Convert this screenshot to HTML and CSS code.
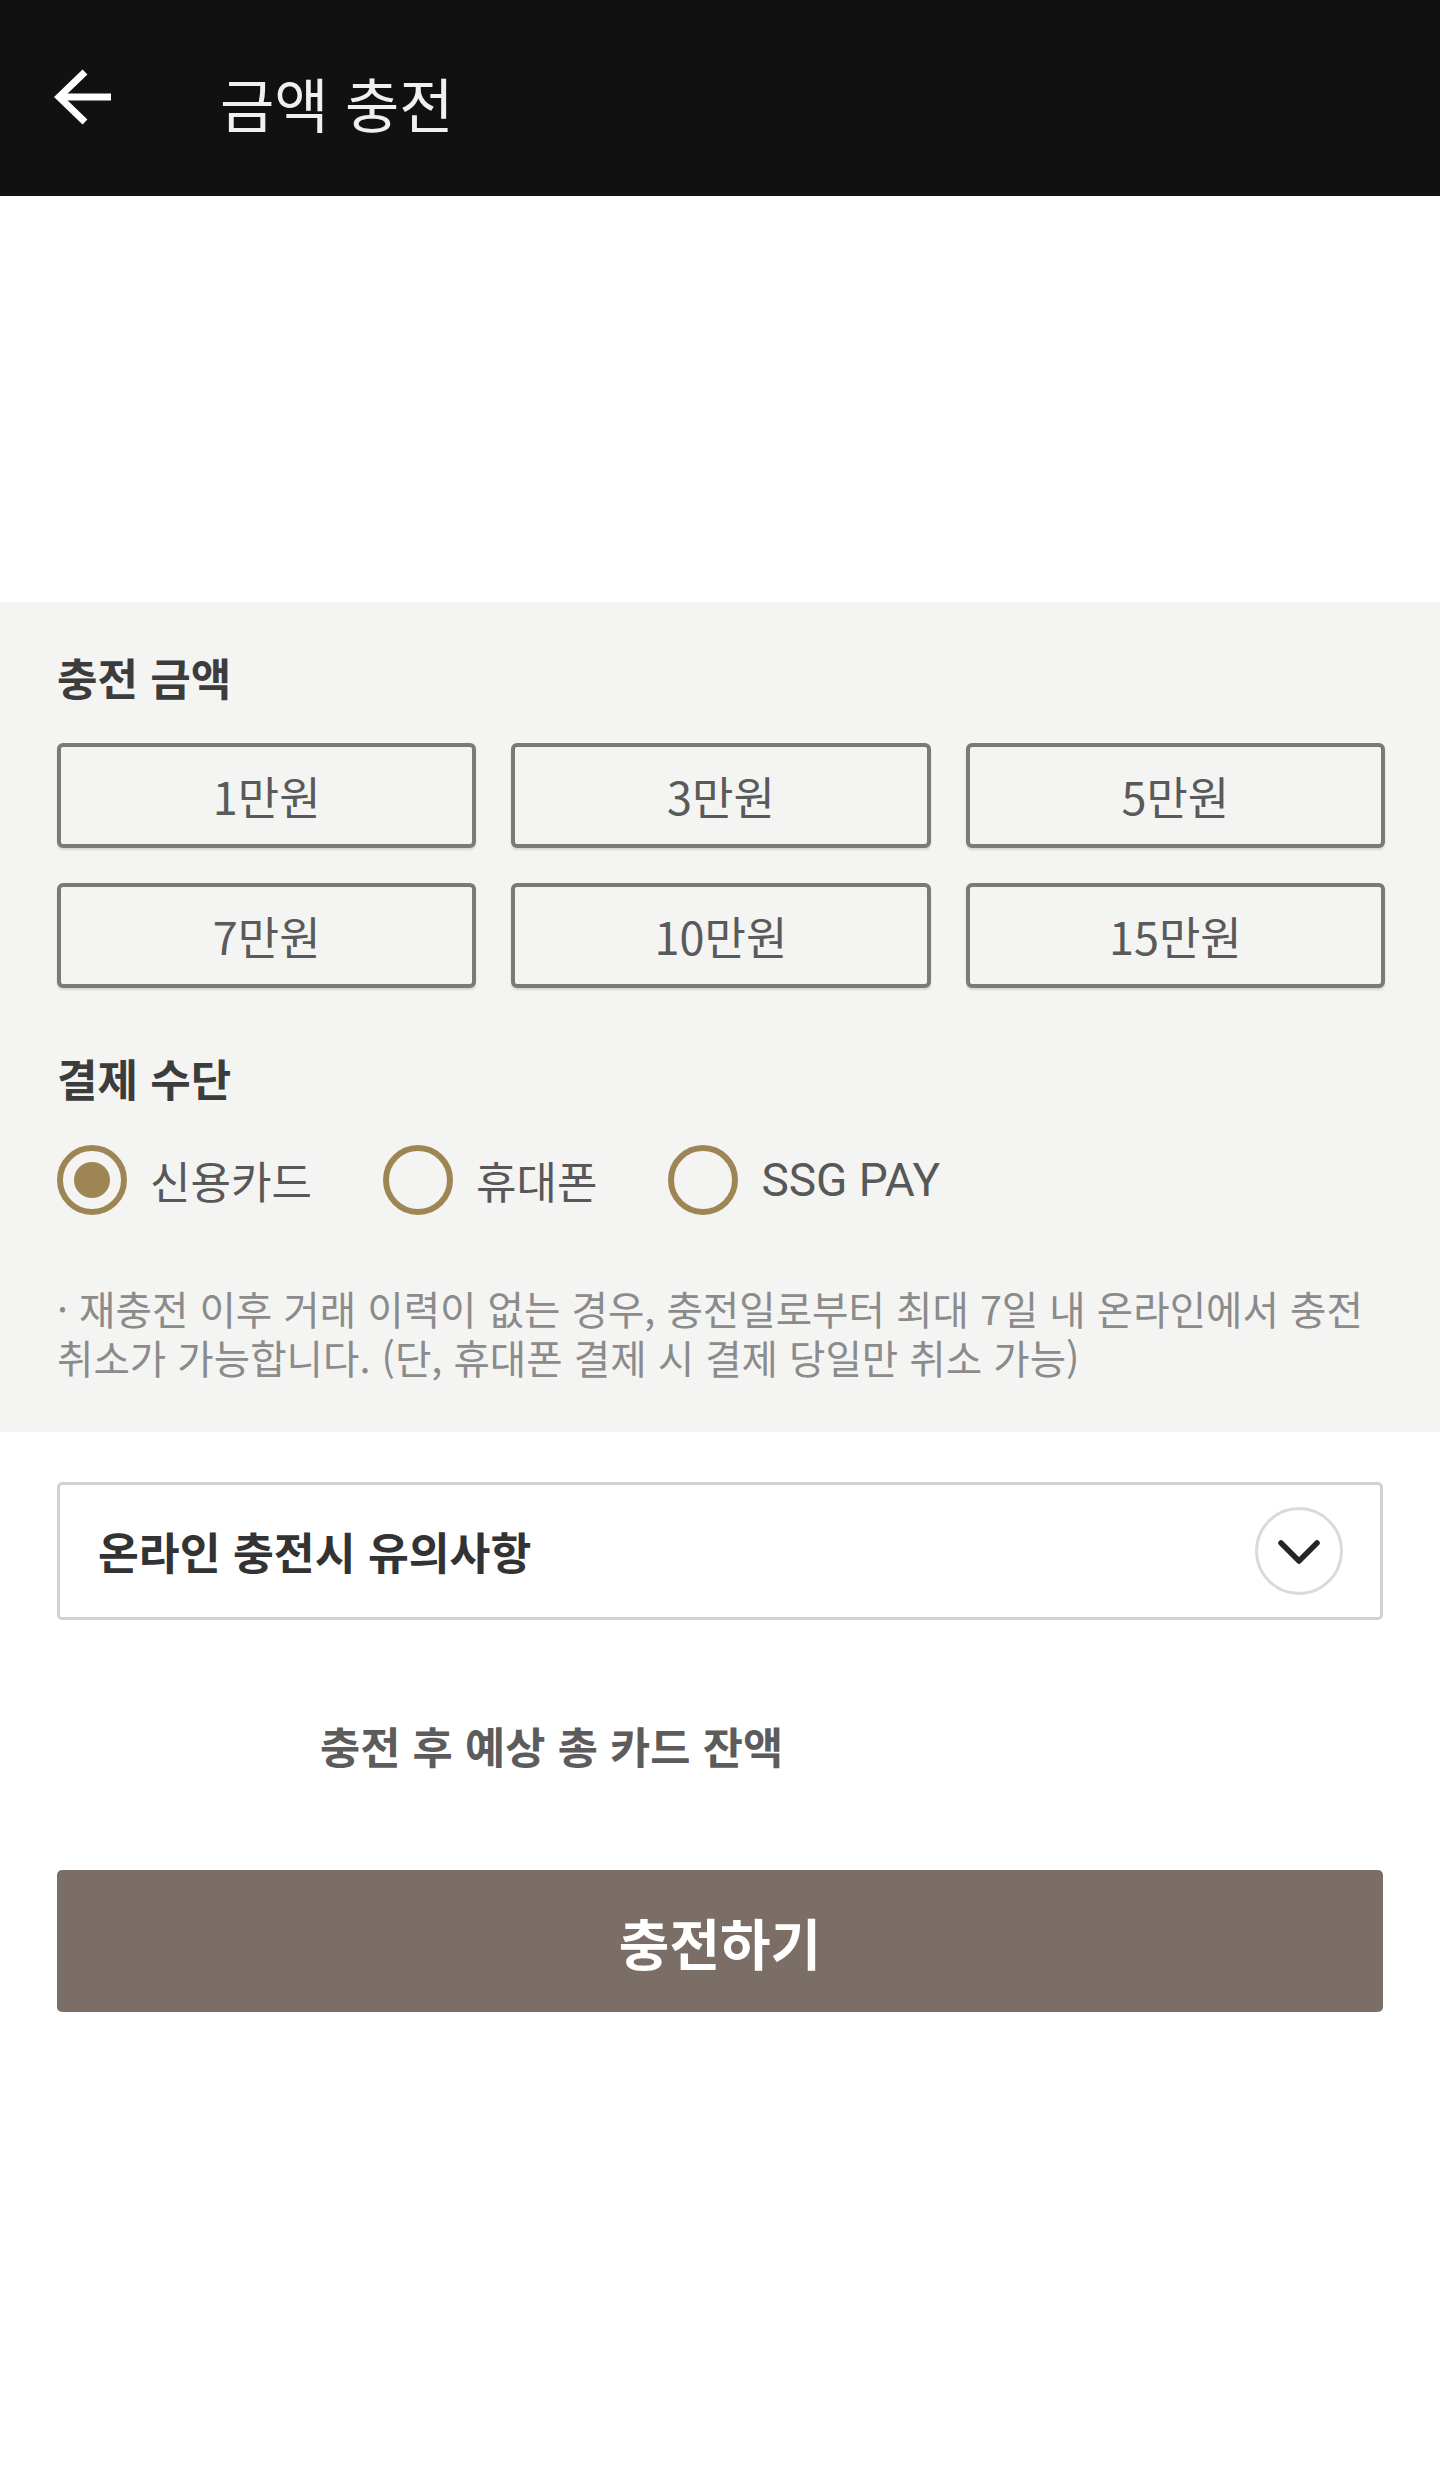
FILE: index.html
```html
<!DOCTYPE html>
<html lang="ko">
<head>
<meta charset="utf-8">
<title>금액 충전</title>
<link rel="stylesheet" href="styles.css">
</head>
<body>
<header class="topbar">
  <svg class="back" width="60" height="56" viewBox="0 0 60 56">
    <path d="M31 3 L5 28 L31 53" fill="none" stroke="#fff" stroke-width="7" stroke-linejoin="miter"/>
    <path d="M5 28 H57" fill="none" stroke="#fff" stroke-width="7"/>
  </svg>
  <h1 class="title">금액 충전</h1>
</header>
<div class="spacer"></div>
<section class="panel">
  <h2 class="sec-title">충전 금액</h2>
  <div class="amounts">
    <button class="amt">1만원</button>
    <button class="amt">3만원</button>
    <button class="amt">5만원</button>
    <button class="amt">7만원</button>
    <button class="amt">10만원</button>
    <button class="amt">15만원</button>
  </div>
  <h2 class="sec-title pay-title">결제 수단</h2>
  <div class="radios">
    <label class="radio"><span class="ring checked"><span class="dot"></span></span><span class="rlabel">신용카드</span></label>
    <label class="radio"><span class="ring"></span><span class="rlabel">휴대폰</span></label>
    <label class="radio"><span class="ring"></span><span class="rlabel latin">SSG PAY</span></label>
  </div>
  <p class="note">· 재충전 이후 거래 이력이 없는 경우, 충전일로부터 최대 7일 내 온라인에서 충전 취소가 가능합니다. (단, 휴대폰 결제 시 결제 당일만 취소 가능)</p>
</section>
<div class="accordion">
  <span class="acc-title">온라인 충전시 유의사항</span>
  <span class="acc-btn">
    <svg width="44" height="30" viewBox="0 0 44 30">
      <path d="M4 6 L22 24 L40 6" fill="none" stroke="#262626" stroke-width="5.5" stroke-linecap="round" stroke-linejoin="round"/>
    </svg>
  </span>
</div>
<p class="balance">충전 후 예상 총 카드 잔액</p>
<button class="submit">충전하기</button>
</body>
</html>
```
FILE: styles.css
```css
* { box-sizing: border-box; }
html, body { margin: 0; padding: 0; background: #fff; }
body {
  width: 1440px;
  min-height: 2472px;
  font-family: "Noto Sans CJK KR", "Noto Sans", sans-serif;
}
.topbar {
  height: 196px;
  background: #111111;
  display: flex;
  align-items: center;
  padding-left: 54px;
}
.back { display: block; margin-top: -2px; }
.title {
  margin: 10px 0 0 106px;
  font-size: 59px;
  font-weight: 400;
  color: #f0f0f0;
  line-height: 64px;
}
.spacer { height: 406px; }
.panel {
  background: #f4f4f2;
  padding: 50px 55px 51px 57px;
}
.sec-title {
  margin: 0;
  font-size: 44px;
  line-height: 50px;
  font-weight: 700;
  color: #3c3c3c;
}
.amounts {
  margin-top: 41px;
  display: grid;
  grid-template-columns: repeat(3, 1fr);
  column-gap: 35px;
  row-gap: 35px;
}
.amt {
  height: 105px;
  border: 4px solid #7c7a77;
  border-radius: 6px;
  background: #f4f4f2;
  font-family: "Noto Sans CJK KR", "Noto Sans", sans-serif;
  font-size: 45px;
  color: #5a5a5a;
  padding: 0;
  box-shadow: 0 2px 2px rgba(0,0,0,0.12);
}
.pay-title { margin-top: 65px; }
.radios {
  margin-top: 42px;
  display: flex;
  align-items: center;
  gap: 71px;
  height: 70px;
}
.radio { display: flex; align-items: center; gap: 23px; }
.ring {
  width: 70px;
  height: 70px;
  border-radius: 50%;
  border: 6px solid #9d8653;
  display: flex;
  align-items: center;
  justify-content: center;
}
.dot {
  width: 36px;
  height: 36px;
  border-radius: 50%;
  background: #9d8653;
}
.rlabel {
  font-size: 44px;
  line-height: 50px;
  color: #585858;
}
.latin { font-family: "Roboto", "Noto Sans CJK KR", sans-serif; font-size: 46px; }
.note {
  margin: 68px 0 0;
  font-size: 39.6px;
  line-height: 49px;
  color: #8b8b8b;
}
.accordion {
  margin: 50px 57px 0;
  height: 138px;
  border: 3px solid #d2d2d2;
  border-radius: 5px;
  display: flex;
  align-items: center;
  justify-content: space-between;
  padding: 0 37px 0 38px;
}
.acc-title {
  font-size: 44.4px;
  font-weight: 700;
  color: #333;
  line-height: 50px;
}
.acc-btn {
  width: 88px;
  height: 88px;
  border: 3px solid #dadada;
  border-radius: 50%;
  display: flex;
  align-items: center;
  justify-content: center;
}
.acc-btn svg { display: block; margin-top: 2px; }
.balance {
  margin: 100px 0 0 320px;
  font-size: 43.7px;
  line-height: 50px;
  font-weight: 700;
  color: #5c5c5c;
}
.submit {
  display: block;
  margin: 100px 57px 0;
  width: 1326px;
  height: 142px;
  border: none;
  border-radius: 5px;
  background: #7b6e66;
  color: #fff;
  font-family: "Noto Sans CJK KR", "Noto Sans", sans-serif;
  font-size: 55px;
  font-weight: 700;
  padding: 0;
}
```
